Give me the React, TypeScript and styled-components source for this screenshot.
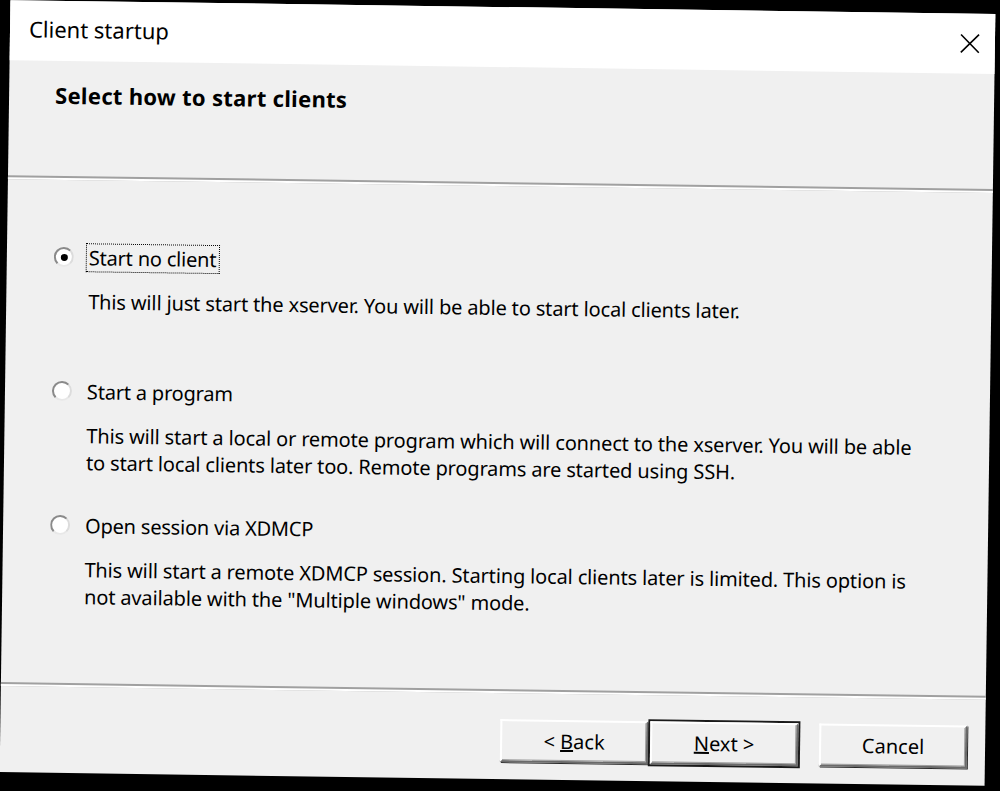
import React from "react";
import styled, { createGlobalStyle } from "styled-components";

const GlobalStyle = createGlobalStyle`
    html, body {
        margin: 0;
        padding: 0;
        background: #000;
        height: 791px;
        overflow: hidden;
    }
    body {
        font-family: "Noto Sans", "Liberation Sans", Arial, sans-serif;
        color: #000;
    }
`;

// the screenshot is tilted a little clockwise, so the whole window is too
const Window = styled.div`
    margin: 7px 0 0 5px;
    width: 985px;
    height: 772px;
    background: #f0f0f0;
    display: flex;
    flex-direction: column;
    transform: rotate(0.8deg);
    transform-origin: center center;
`;

const TitleBar = styled.div`
    height: 60px;
    flex: 0 0 auto;
    background: #fff;
    display: flex;
    align-items: center;
    justify-content: space-between;
    padding: 0 15px 0 19px;
`;

const Title = styled.span`
    font-size: 22px;
    line-height: 28px;
    margin-top: -4px;
`;

const CloseButton = styled.button`
    width: 20px;
    height: 20px;
    padding: 0;
    border: 0;
    background: transparent;
    display: flex;
    align-items: center;
    justify-content: center;
`;

const Header = styled.div`
    height: 115px;
    flex: 0 0 auto;
    padding: 20px 0 0 46px;
    box-sizing: border-box;
`;

const Heading = styled.h1`
    margin: 0;
    font-size: 22px;
    line-height: 28px;
    font-weight: 700;
    letter-spacing: 0.3px;
`;

const Rule = styled.div`
    height: 2px;
    background: #a0a0a0;
    border-bottom: 2px solid #fff;
    flex: 0 0 auto;
`;

const Body = styled.div`
    flex: 1;
    padding: 62px 0 0 47px;
    display: flex;
    flex-direction: column;
    gap: 34px;
`;

const Option = styled.div`
    display: flex;
    flex-direction: column;
    gap: 16px;
`;

const OptionRow = styled.label`
    display: flex;
    align-items: center;
    gap: 12px;
    height: 30px;
`;

const Radio = styled.span<{ $checked?: boolean }>`
    position: relative;
    width: 20px;
    height: 20px;
    box-sizing: border-box;
    border-radius: 50%;
    background: #fff;
    border: 2px solid;
    border-color: #8a8a8a #dcdcdc #e8e8e8 #8a8a8a;
    flex: 0 0 auto;

    &::after {
        content: "";
        display: ${p => (p.$checked ? "block" : "none")};
        position: absolute;
        left: 50%;
        top: 50%;
        width: 7px;
        height: 7px;
        margin: -3.5px 0 0 -3.5px;
        border-radius: 50%;
        background: #000;
    }
`;

const OptionLabel = styled.span<{ $focused?: boolean }>`
    font-size: 20px;
    line-height: 27px;
    letter-spacing: -0.2px;
    padding: 0 2px;
    border: 1px dotted ${p => (p.$focused ? "#000" : "transparent")};
`;

const Description = styled.p`
    margin: 0;
    padding-left: 35px;
    width: 835px;
    min-height: 54px;
    font-size: 20px;
    line-height: 27px;
    letter-spacing: -0.15px;
`;

const Footer = styled.div`
    height: 86px;
    flex: 0 0 auto;
    display: flex;
    align-items: flex-start;
    justify-content: flex-end;
    padding: 26px 18px 0 0;
    box-sizing: border-box;
`;

const ButtonPair = styled.div`
    display: flex;
    gap: 2px;
    margin-right: 21px;
`;

const Button = styled.button<{ $default?: boolean }>`
    width: 148px;
    height: 43px;
    box-sizing: border-box;
    background: #f0f0f0;
    font-family: "Noto Sans", "Liberation Sans", Arial, sans-serif;
    font-size: 20px;
    color: #000;
    padding: 0;
    border: 2px solid;
    border-color: #fff #6a6a6a #6a6a6a #fff;
    box-shadow: ${p =>
        p.$default
            ? "0 0 0 2px #1a1a1a, inset -1px -1px 0 #a0a0a0"
            : "1px 1px 0 #2a2a2a, inset -1px -1px 0 #a0a0a0"};
`;

const options = [
    {
        label: "Start no client",
        text: "This will just start the xserver. You will be able to start local clients later.",
        checked: true,
    },
    {
        label: "Start a program",
        text: "This will start a local or remote program which will connect to the xserver. You will be able to start local clients later too. Remote programs are started using SSH.",
    },
    {
        label: "Open session via XDMCP",
        text: 'This will start a remote XDMCP session. Starting local clients later is limited. This option is not available with the "Multiple windows" mode.',
    },
];

function App() {
    return (
        <>
            <GlobalStyle />
            <Window>
                <TitleBar>
                    <Title>Client startup</Title>
                    <CloseButton aria-label="Close">
                        <svg width="20" height="20" viewBox="0 0 20 20">
                            <path d="M1 1 L19 19 M19 1 L1 19" stroke="#000" strokeWidth="1.6" fill="none" />
                        </svg>
                    </CloseButton>
                </TitleBar>
                <Header>
                    <Heading>Select how to start clients</Heading>
                </Header>
                <Rule />
                <Body>
                    {options.map(o => (
                        <Option key={o.label}>
                            <OptionRow>
                                <Radio $checked={o.checked} />
                                <OptionLabel $focused={o.checked}>{o.label}</OptionLabel>
                            </OptionRow>
                            <Description>{o.text}</Description>
                        </Option>
                    ))}
                </Body>
                <Rule />
                <Footer>
                    <ButtonPair>
                        <Button>&lt; <u>B</u>ack</Button>
                        <Button $default>
                            <u>N</u>ext &gt;
                        </Button>
                    </ButtonPair>
                    <Button>Cancel</Button>
                </Footer>
            </Window>
        </>
    );
}

export default App;
